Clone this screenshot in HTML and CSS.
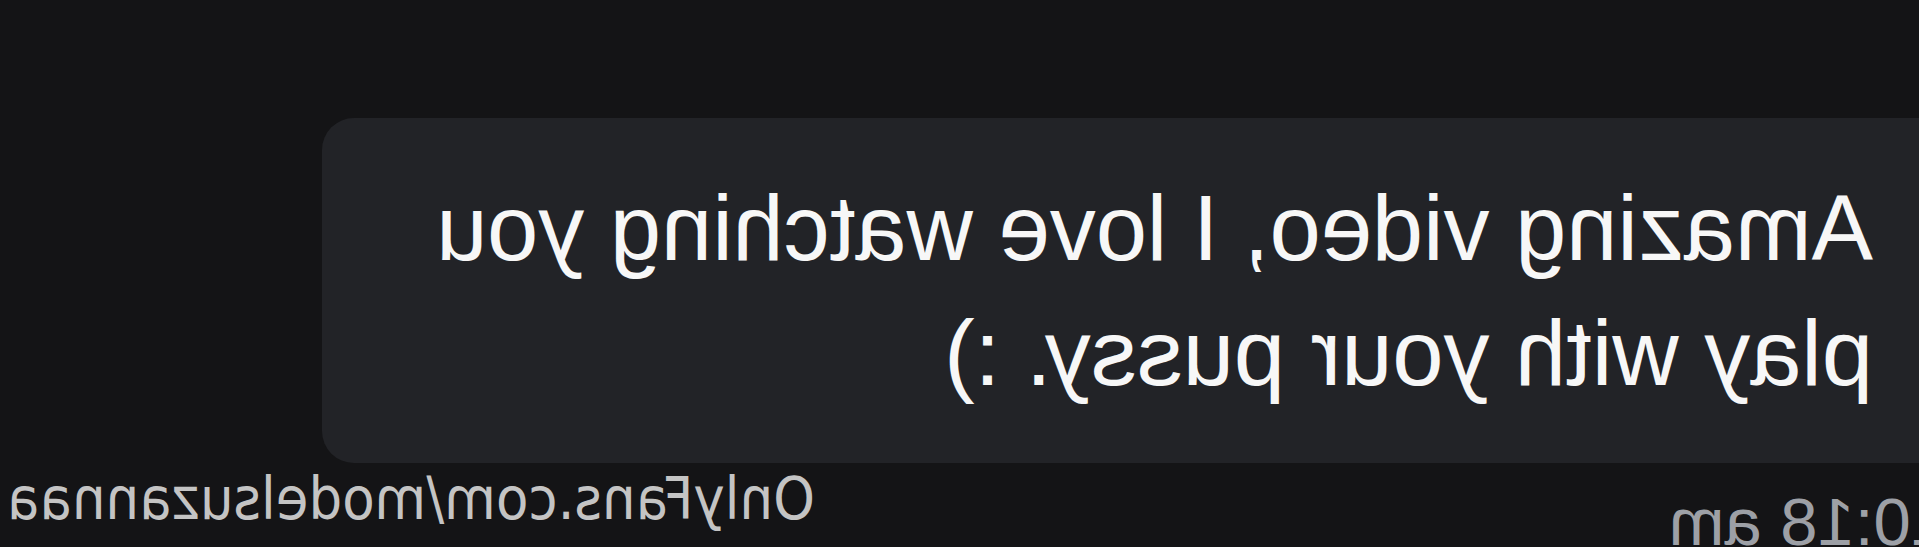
FILE: index.html
```html
<!DOCTYPE html>
<html lang="en">

<head>
  <meta charset="UTF-8">
  <meta name="viewport" content="width=device-width, initial-scale=1.0">
  <title>Message</title>
  <link rel="stylesheet" href="styles.css">
</head>

<body>
  <!-- the capture is mirrored, so the whole thread is flipped -->
  <div class="thread">
    <div class="message-bubble">
      <p class="message-text">Amazing video, I love watching you play with your pussy. :)</p>
    </div>

    <div class="message-meta">
      <span class="message-time">10:18 am</span>
      <span class="watermark">OnlyFans.com/modelsuzannaa</span>
    </div>
  </div>
</body>

</html>
```

FILE: styles.css
```css
:root {
  --background: #141416;
  --bubble: #222327;
  --text: #f7f7f7;
  --time: #9da0a6;
  --mark: #c4c4c4;
}

* {
  box-sizing: border-box;
  margin: 0;
  padding: 0;
}

body {
  background: var(--background);
  color: var(--text);
  font-family: 'Liberation Sans', Arial, sans-serif;
  width: 1919px;
  height: 547px;
  overflow: hidden;
}

.thread {
  width: 1919px;
  height: 547px;
  padding-top: 118px;
  transform: scaleX(-1);
}

.message-bubble {
  width: 1637px;
  height: 345px;
  margin-left: -40px;
  padding: 48px 60px 0 86px;
  background: var(--bubble);
  border-radius: 32px;
}

.message-text {
  font-size: 92px;
  line-height: 125px;
}

.message-meta {
  display: flex;
  justify-content: space-between;
  align-items: flex-start;
  padding-right: 7px;
}

.message-time {
  margin-left: -29px;
  margin-top: 25px;
  font-size: 67px;
  line-height: 1;
  color: var(--time);
  white-space: nowrap;
}

.watermark {
  margin-top: 6px;
  font-family: 'DejaVu Sans Condensed', 'DejaVu Sans', sans-serif;
  font-size: 59px;
  line-height: 1;
  color: var(--mark);
}
```
